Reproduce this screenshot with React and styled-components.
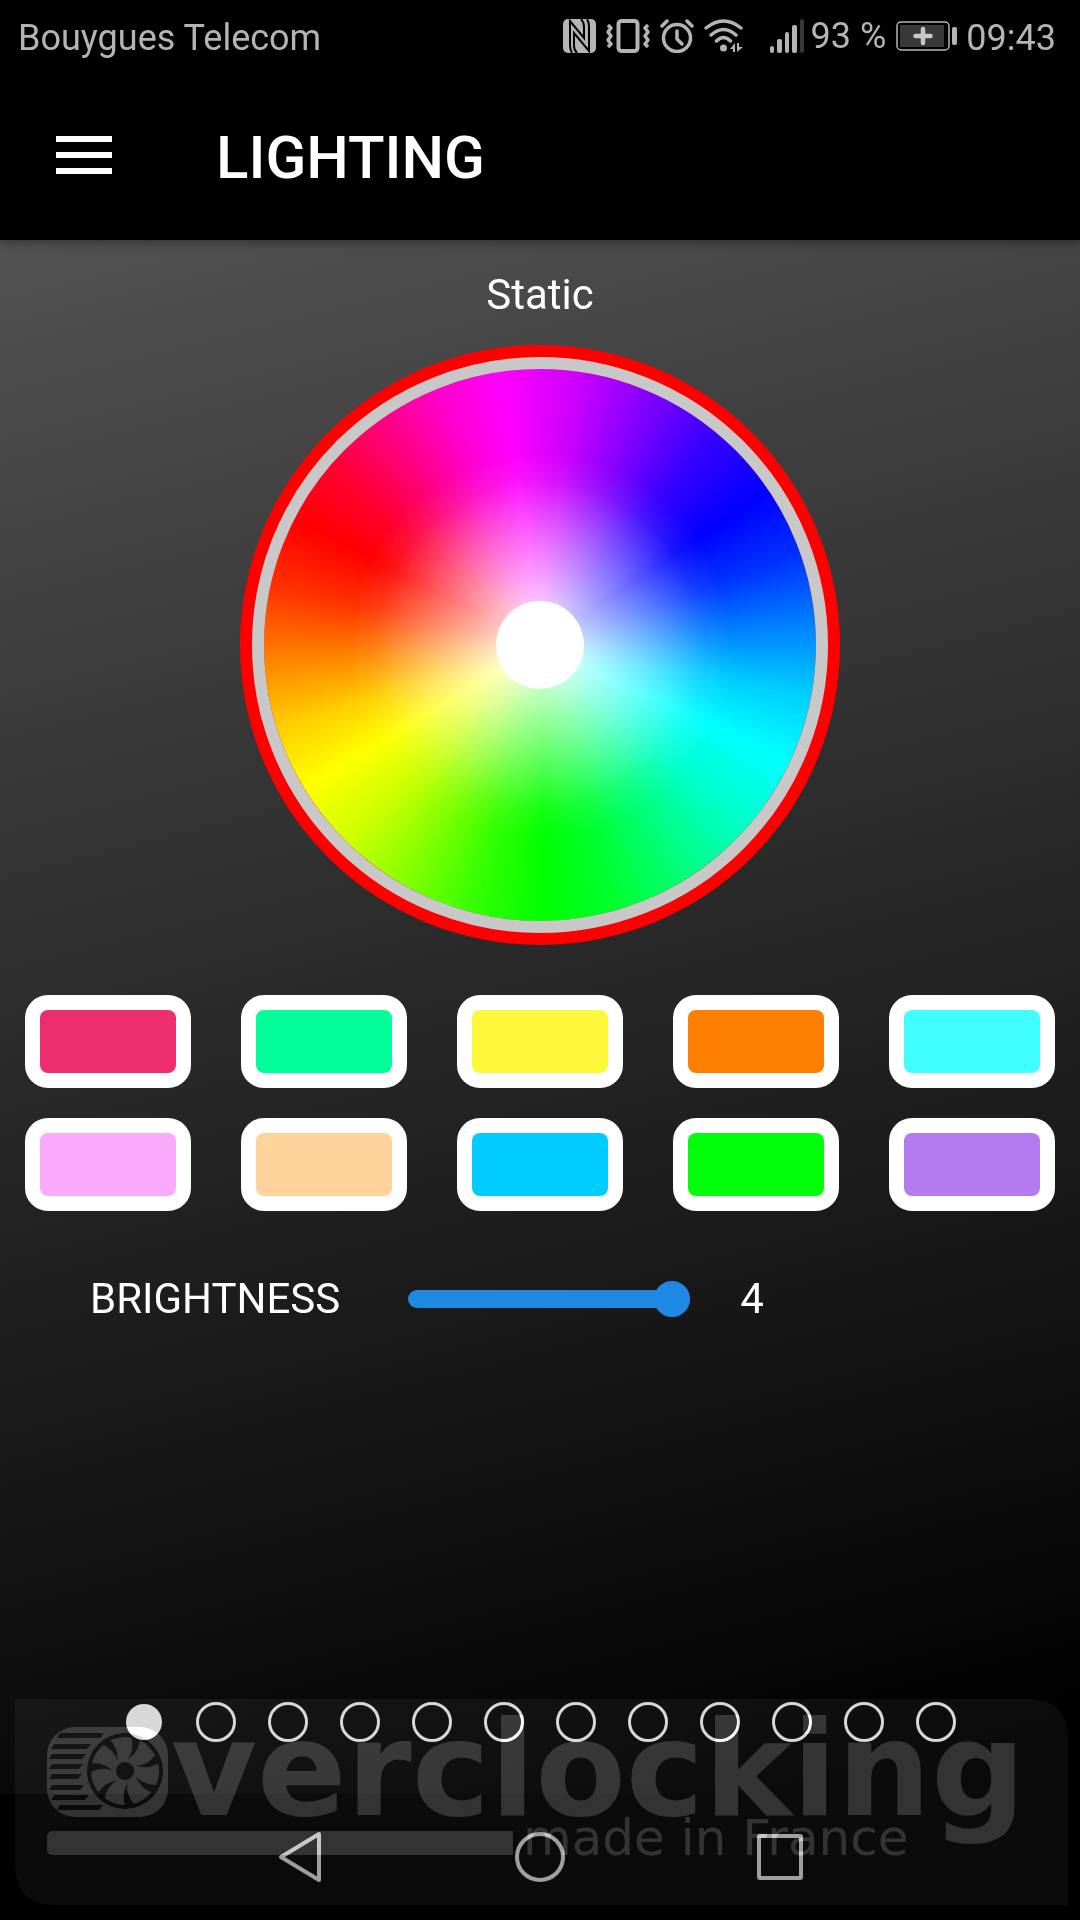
import React, { useState } from "react";
import styled, { createGlobalStyle } from "styled-components";

const GlobalStyle = createGlobalStyle`
  *,
  *::before {
    box-sizing: border-box;
  }
  body {
    margin: 0;
    background: #000;
    color: #fff;
    font-family: Roboto, "Liberation Sans", sans-serif;
  }
  button {
    padding: 0;
    border: 0;
    background: none;
    cursor: pointer;
  }
`;

const Screen = styled.div`
  position: relative;
  display: flex;
  flex-direction: column;
  min-height: 100vh;
  background: #000;
`;

const StatusBar = styled.div`
  display: flex;
  align-items: center;
  height: 76px;
  padding: 0 24px 0 18px;
  color: #b4b4b4;
  font-size: 36px;
  line-height: 44px;
`;

const StatusIcons = styled.div`
  display: flex;
  align-items: center;
  align-self: flex-start;
  height: 72px;
  margin-left: auto;
  margin-right: 8px;
  gap: 10px;
  svg {
    display: block;
  }
`;

const Signal = styled.div`
  display: flex;
  align-items: center;
  gap: 5px;
  margin-left: 16px;
`;

const Header = styled.header`
  position: relative;
  display: flex;
  align-items: center;
  gap: 104px;
  height: 164px;
  padding: 0 56px;
  background: #000;
  box-shadow: 0 2px 10px rgba(0, 0, 0, 0.4);
`;

const MenuButton = styled.button`
  width: 56px;
  height: 56px;
`;

const Title = styled.h1`
  margin: 0;
  font-size: 60px;
  font-weight: 500;
  line-height: 72px;
`;

const Main = styled.main`
  flex: 1;
  display: flex;
  flex-direction: column;
  padding: 31px 0 52px;
  background: linear-gradient(166deg, #525252 0%, #2a2a2a 45%, #000 96%);
`;

const ModeName = styled.h2`
  margin: 0;
  font-size: 42px;
  font-weight: 400;
  line-height: 48px;
  text-align: center;
`;

const Wheel = styled.div`
  display: flex;
  align-items: center;
  justify-content: center;
  align-self: center;
  width: 600px;
  height: 600px;
  margin-top: 26px;
  padding: 12px;
  border-radius: 50%;
  background: ${props => props.$color};
`;

const WheelDisc = styled.div`
  display: flex;
  align-items: center;
  justify-content: center;
  width: 100%;
  height: 100%;
  border: 12px solid #c8c8c8;
  border-radius: 50%;
  background: radial-gradient(
      circle,
      #fff 0,
      rgba(255, 255, 255, 0.38) 112px,
      rgba(255, 255, 255, 0.08) 164px,
      rgba(255, 255, 255, 0) 192px
    ) padding-box,
    conic-gradient(
      from -8deg,
      #f0f 0deg,
      #cc00ff 16deg,
      #3300ff 48deg,
      #00f 64deg,
      #0033ff 79deg,
      #00ccff 108deg,
      #0ff 123deg,
      #00ffcc 139deg,
      #00ff33 171deg,
      #0f0 187deg,
      #33ff00 202deg,
      #ccff00 232deg,
      #ff0 247deg,
      #ffcc00 261deg,
      #ff3300 290deg,
      #f00 305deg,
      #ff0033 319deg,
      #ff00cc 346deg,
      #f0f 360deg
    ) padding-box;
`;

const WheelCenter = styled.button`
  width: 88px;
  height: 88px;
  border-radius: 50%;
  background: #fff;
`;

const Swatches = styled.div`
  display: grid;
  grid-template-columns: repeat(5, 1fr);
  justify-items: center;
  row-gap: 30px;
  margin-top: 50px;
`;

const Swatch = styled.button`
  width: 166px;
  height: 93px;
  border: 15px solid #fff;
  border-radius: 23px;
  background: #fff;
  &::before {
    content: "";
    display: block;
    height: 100%;
    border-radius: 8px;
    background: ${props => props.$color};
  }
`;

const Brightness = styled.div`
  display: flex;
  align-items: center;
  margin-top: 64px;
  padding: 0 90px;
  font-size: 42px;
  line-height: 48px;
`;

const Slider = styled.input`
  appearance: none;
  width: 282px;
  height: 36px;
  margin: 0 50px 0 68px;
  background: none;
  &::-webkit-slider-runnable-track {
    height: 18px;
    border-radius: 9px;
    background: #1e88e5;
  }
  &::-webkit-slider-thumb {
    appearance: none;
    width: 36px;
    height: 36px;
    margin-top: -9px;
    border-radius: 50%;
    background: #1e88e5;
  }
`;

const Pager = styled.div`
  display: flex;
  justify-content: center;
  margin-top: auto;
`;

const PageButton = styled.button`
  display: flex;
  align-items: center;
  justify-content: center;
  width: 72px;
  height: 40px;
  &::before {
    content: "";
    width: ${props => (props.$active ? 36 : 40)}px;
    height: ${props => (props.$active ? 36 : 40)}px;
    border: ${props => (props.$active ? 0 : 3)}px solid #cdcdcd;
    border-radius: 50%;
    background: ${props => (props.$active ? "#cdcdcd" : "none")};
  }
`;

const NavBar = styled.nav`
  display: flex;
  align-items: center;
  justify-content: center;
  gap: 180px;
  height: 126px;
`;

const NavButton = styled.button`
  width: 60px;
  height: 60px;
  svg {
    display: block;
    fill: none;
    stroke: #949494;
    stroke-width: 4;
    stroke-linejoin: round;
  }
`;

/* brand plate lies over the pager and the nav bar and lightens them */
const Watermark = styled.div`
  position: absolute;
  left: 15px;
  right: 12px;
  bottom: 15px;
  mix-blend-mode: plus-lighter;
  pointer-events: none;
  svg {
    display: block;
    width: 100%;
    overflow: visible;
  }
`;

const colors = [
  ["Pink", "#ec2d6e"],
  ["Mint", "#00ff9b"],
  ["Yellow", "#fdf83a"],
  ["Orange", "#ff8000"],
  ["Cyan", "#41ffff"],
  ["Rose", "#faaafb"],
  ["Peach", "#ffd39b"],
  ["Sky", "#00ccff"],
  ["Green", "#00ff0a"],
  ["Purple", "#b47af0"]
];

const stripes = [
  [45, 89, 34],
  [39, 76, 45],
  [37, 71, 55],
  [37, 68, 65],
  [37, 67, 75],
  [37, 69, 86],
  [39, 74, 96],
  [45, 88, 106]
];

const NfcIcon = () => (
  <svg width="33" height="34" viewBox="0 0 33 34" fill="#b4b4b4">
    <rect width="33" height="34" rx="5" />
    <path
      d="M9 34Q7 31 7 26V2L21 19V8Q21 3 18 0M24 0Q26 3 26 8V32L11 14V27Q11 31 14 34"
      fill="none"
      stroke="#000"
      strokeWidth="2"
    />
  </svg>
);

const VibrateIcon = () => (
  <svg width="44" height="34" viewBox="0 0 44 34" fill="none" stroke="#b4b4b4">
    <rect x="12.500" y="2" width="19" height="30" rx="3" strokeWidth="4" />
    <path
      d="M2 6L5 9L2 13L5 17L2 21L5 25L2 28M42 6L39 9L42 13L39 17L42 21L39 25L42 28"
      strokeWidth="3.500"
      strokeLinejoin="round"
    />
  </svg>
);

const AlarmIcon = () => (
  <svg width="34" height="34" viewBox="0 0 34 34" fill="none" stroke="#b4b4b4" strokeLinecap="round">
    <circle cx="17" cy="19" r="13.500" strokeWidth="3.500" />
    <path d="M17 12V20L22 25" strokeWidth="3.500" strokeLinejoin="round" />
    <path d="M2 7L7 2M32 7L27 2" strokeWidth="3.500" />
  </svg>
);

const WifiIcon = () => (
  <svg width="40" height="34" viewBox="0 0 40 34" fill="none" stroke="#b4b4b4" strokeLinecap="round">
    <path d="M2 9Q19.500 -5 37 9M7 16Q19.500 5 32 16M12.500 22Q19.500 15 26.500 22" strokeWidth="3.500" />
    <circle cx="19.500" cy="29" r="3.500" fill="#b4b4b4" stroke="none" />
    <path d="M26 30L31 24V33H29V30ZM33 24H35L35 28H39L33 33Z" fill="#b4b4b4" stroke="none" />
  </svg>
);

const SignalIcon = () => (
  <svg width="36" height="34" viewBox="0 0 36 34" fill="#b4b4b4">
    <rect x="0" y="27" width="4" height="7" rx="2" />
    <rect x="7" y="20" width="5" height="14" rx="2" />
    <rect x="15" y="13" width="4" height="21" rx="2" />
    <rect x="22" y="6" width="5" height="28" rx="2" />
    <rect x="30" y="0" width="4" height="34" rx="2" fill="#383838" />
  </svg>
);

const BatteryIcon = () => (
  <svg width="62" height="30" viewBox="0 0 62 30">
    <rect x="1" y="1" width="52" height="28" rx="4" fill="none" stroke="#b4b4b4" strokeWidth="1.500" />
    <rect x="4" y="4" width="44" height="22" fill="#383838" />
    <path d="M27 8V22M19.500 15H34.500" stroke="#c8c8c8" strokeWidth="4.500" strokeLinecap="round" />
    <rect x="56" y="6" width="5" height="18" rx="2" fill="#b4b4b4" />
  </svg>
);

const Brand = () => (
  <Watermark>
    <svg viewBox="0 0 1053 206" fill="#fff">
      <mask id="cooler">
        <rect x="32" y="28" width="121" height="90" rx="28" />
        {stripes.map(([x1, x2, y]) => (
          <path key={y} d={`M${x1} ${y}H${x2}L${x2 - 4} ${y + 5}H${x1 - 3}Z`} fill="#000" />
        ))}
        <circle cx="110" cy="72" r="38" fill="#000" />
        <circle cx="110" cy="72" r="34" />
        <circle cx="110" cy="72" r="9" fill="#000" />
        {[0, 1, 2, 3, 4, 5, 6].map(i => (
          <path
            key={i}
            d="M3 -12Q10 -21 6 -36L15 -34Q15 -20 3 -12Z"
            fill="#000"
            transform={`translate(110 72) rotate(${(i * 360) / 7})`}
          />
        ))}
      </mask>
      <path d="M0 0H1013Q1053 0 1053 40V206H40Q0 206 0 166Z" opacity="0.045" />
      <g opacity="0.16">
        <rect x="32" y="28" width="121" height="90" mask="url(#cooler)" />
        <path d="M38 132H498V156H38Q32 156 32 150V138Q32 132 38 132Z" />
        <text x="156" y="116" fontFamily="DejaVu Sans" fontWeight="700" fontSize="132">
          verclocking
        </text>
        <text x="508" y="156" fontFamily="DejaVu Sans" fontSize="50">
          made in France
        </text>
      </g>
    </svg>
  </Watermark>
);

export default () => {
  const [color, setColor] = useState("#ff0000");
  const [level, setLevel] = useState(4);
  const [page, setPage] = useState(0);
  return (
    <Screen>
      <GlobalStyle />
      <StatusBar>
        <span>Bouygues Telecom</span>
        <StatusIcons>
          <NfcIcon />
          <VibrateIcon />
          <AlarmIcon />
          <WifiIcon />
          <Signal>
            <SignalIcon />
            <span>93 %</span>
          </Signal>
          <BatteryIcon />
        </StatusIcons>
        <span>09:43</span>
      </StatusBar>
      <Header>
        <MenuButton aria-label="Menu">
          <svg width="56" height="56" viewBox="0 0 56 56" fill="#fff">
            <path d="M0 6H56V12H0ZM0 22H56V28H0ZM0 38H56V44H0Z" />
          </svg>
        </MenuButton>
        <Title>LIGHTING</Title>
      </Header>
      <Main>
        <ModeName>Static</ModeName>
        <Wheel $color={color}>
          <WheelDisc>
            <WheelCenter aria-label="White" onClick={() => setColor("#ffffff")} />
          </WheelDisc>
        </Wheel>
        <Swatches>
          {colors.map(([name, value]) => (
            <Swatch key={name} aria-label={name} $color={value} onClick={() => setColor(value)} />
          ))}
        </Swatches>
        <Brightness>
          <label htmlFor="brightness">BRIGHTNESS</label>
          <Slider
            id="brightness"
            type="range"
            min="0"
            max="4"
            value={level}
            onChange={e => setLevel(Number(e.target.value))}
          />
          <output htmlFor="brightness">{level}</output>
        </Brightness>
        <Pager>
          {Array.from({ length: 12 }, (_, i) => (
            <PageButton
              key={i}
              aria-label={`Page ${i + 1}`}
              $active={i === page}
              onClick={() => setPage(i)}
            />
          ))}
        </Pager>
      </Main>
      <NavBar>
        <NavButton aria-label="Back">
          <svg width="60" height="60" viewBox="0 0 60 60">
            <path d="M49 7V53L11 30Z" />
          </svg>
        </NavButton>
        <NavButton aria-label="Home">
          <svg width="60" height="60" viewBox="0 0 60 60">
            <circle cx="30" cy="30" r="23" />
          </svg>
        </NavButton>
        <NavButton aria-label="Recent apps">
          <svg width="60" height="60" viewBox="0 0 60 60">
            <rect x="9" y="9" width="42" height="42" rx="1" />
          </svg>
        </NavButton>
      </NavBar>
      <Brand />
    </Screen>
  );
};
